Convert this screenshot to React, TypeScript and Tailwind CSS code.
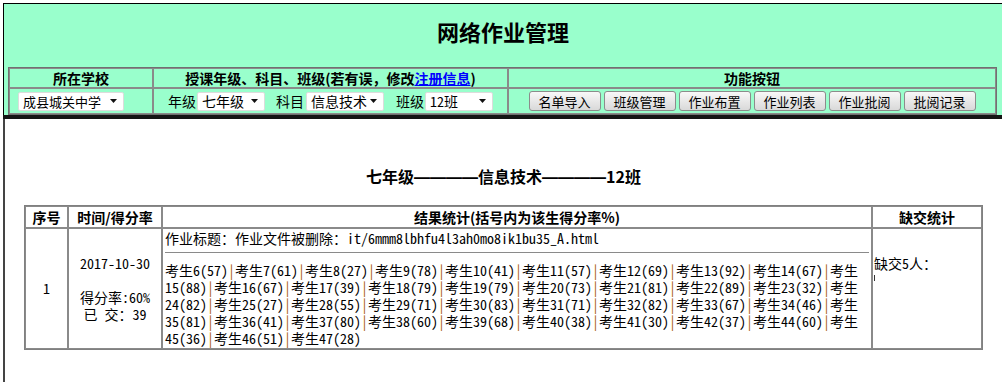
import type { ReactNode } from 'react'

const body = "font-['Noto_Sans_Mono_CJK_SC','Noto_Sans_CJK_SC',sans-serif]"
const bold = "font-['Noto_Sans_CJK_SC',sans-serif] font-bold"

/** Student result lines, wrapped exactly as in the original page */
const resultLines = [
  '考生6(57)|考生7(61)|考生8(27)|考生9(78)|考生10(41)|考生11(57)|考生12(69)|考生13(92)|考生14(67)|考生',
  '15(88)|考生16(67)|考生17(39)|考生18(79)|考生19(79)|考生20(73)|考生21(81)|考生22(89)|考生23(32)|考生',
  '24(82)|考生25(27)|考生28(55)|考生29(71)|考生30(83)|考生31(71)|考生32(82)|考生33(67)|考生34(46)|考生',
  '35(81)|考生36(41)|考生37(80)|考生38(60)|考生39(68)|考生40(38)|考生41(30)|考生42(37)|考生44(60)|考生',
  '45(36)|考生46(51)|考生47(28)',
]

const buttons = ['名单导入', '班级管理', '作业布置', '作业列表', '作业批阅', '批阅记录']

function FakeSelect({ value, width, size = 'text-[14px]' }: { value: string; width: string; size?: string }) {
  return (
    <div
      className={`${width} ${size} h-[19px] bg-white border border-[#dcdcdc] rounded-[2px] flex items-center justify-between pl-[4px] pr-[6px] leading-none`}
    >
      <span>{value}</span>
      <svg width="7" height="4" viewBox="0 0 7 4">
        <path d="M0 0 L7 0 L3.5 4 Z" fill="#111" />
      </svg>
    </div>
  )
}

function ResultLine({ text }: { text: string }) {
  const parts = text.split('|')
  const out: ReactNode[] = []
  parts.forEach((p, i) => {
    if (i > 0)
      out.push(
        <span key={`s${i}`} className="text-[#a8580c]">
          |
        </span>
      )
    out.push(<span key={`t${i}`}>{p}</span>)
  })
  return <div className="whitespace-pre h-[17px]">{out}</div>
}

export default function App() {
  const cell = 'border border-[#8a8a8a] p-0'
  const dash = "font-['Liberation_Sans',sans-serif]"

  return (
    <div className={`w-[1002px] h-[382px] overflow-hidden bg-white pl-[3px] pt-[3px] text-black ${body}`}>
      {/* Header block */}
      <div className="border-t border-l border-black bg-[#99ffcc] h-[112px]">
        <div className={`h-[63px] pb-[8px] flex items-center justify-center text-[22px] ${bold}`}>网络作业管理</div>
        <table className="ml-[4px] w-[989px] table-fixed border border-[#707070] border-separate border-spacing-0">
          <colgroup>
            <col className="w-[144px]" />
            <col className="w-[355px]" />
            <col />
          </colgroup>
          <tbody>
            <tr className={`h-[20px] text-[14px] leading-none ${bold}`}>
              <td className={`${cell} text-center pb-[1px]`}>所在学校</td>
              <td className={`${cell} text-center pb-[1px]`}>
                授课年级、科目、班级(若有误，修改
                <span className="text-[#0000ff] underline">注册信息</span>)
              </td>
              <td className={`${cell} text-center pb-[1px]`}>功能按钮</td>
            </tr>
            <tr className="h-[26px] text-[14px]">
              <td className={cell}>
                <div className="pl-[8px]">
                  <FakeSelect value="成县城关中学" width="w-[106px]" size="text-[13px]" />
                </div>
              </td>
              <td className={cell}>
                <div className="flex items-center justify-center">
                  <span className="mr-[1px]">年级</span>
                  <FakeSelect value="七年级" width="w-[68px]" />
                  <span className="ml-[11px] mr-[2px]">科目</span>
                  <FakeSelect value="信息技术" width="w-[78px]" />
                  <span className="ml-[12px] mr-[1px]">班级</span>
                  <FakeSelect value="12班" width="w-[68px]" />
                </div>
              </td>
              <td className={cell}>
                <div className="flex items-center justify-center gap-[3px]">
                  {buttons.map((b) => (
                    <button
                      key={b}
                      className="w-[72px] h-[20px] border border-[#8c8c8c] rounded-[3px] bg-linear-to-b from-[#f8f8f8] to-[#d9d9d9] text-[13px] leading-none"
                    >
                      {b}
                    </button>
                  ))}
                </div>
              </td>
            </tr>
          </tbody>
        </table>
      </div>
      <div className="h-[4px] bg-[#151515]" />

      {/* Content */}
      <div className="border-l-2 border-[#444] bg-white h-[300px]">
        <div className={`pt-[47px] h-[86px] text-center text-[16px] leading-[20px] ${bold}`}>
          七年级<span className={dash}>————</span>信息技术<span className={dash}>————</span>12班
        </div>
        <table className="mx-auto w-[959px] table-fixed border border-[#808080] border-separate border-spacing-0 text-[14px]">
          <colgroup>
            <col className="w-[43px]" />
            <col className="w-[94px]" />
            <col className="w-[710px]" />
            <col />
          </colgroup>
          <tbody>
            <tr className={`h-[22px] leading-none ${bold}`}>
              <td className={`${cell} text-center`}>序号</td>
              <td className={`${cell} text-center`}>时间/得分率</td>
              <td className={`${cell} text-center`}>结果统计(括号内为该生得分率%)</td>
              <td className={`${cell} text-center`}>缺交统计</td>
            </tr>
            <tr className="leading-[17px]">
              <td className={`${cell} text-center align-middle`}>1</td>
              <td className={`${cell} text-center align-middle`}>
                <div>2017-10-30</div>
                <div>&nbsp;</div>
                <div>得分率:60%</div>
                <div>已&nbsp;交：39</div>
              </td>
              <td className={`${cell} align-top pl-[2px] pt-[1px] pb-[1px]`}>
                <div className="whitespace-pre">作业标题：作业文件被删除：it/6mmm8lbhfu4l3ah0mo8ik1bu35_A.html</div>
                <div className="mt-[5px] mb-[9px] mr-[2px] border-t border-[#8a8a8a]" />
                {resultLines.map((l, i) => (
                  <ResultLine key={i} text={l} />
                ))}
              </td>
              <td className={`${cell} align-middle pl-[1px]`}>
                <div>缺交5人：</div>
                <div className="relative">
                  &nbsp;
                  <span className="absolute left-0 top-[3px] w-[1px] h-[6px] bg-[#333]" />
                </div>
                <div>&nbsp;</div>
                <div>&nbsp;</div>
              </td>
            </tr>
          </tbody>
        </table>
      </div>
    </div>
  )
}
